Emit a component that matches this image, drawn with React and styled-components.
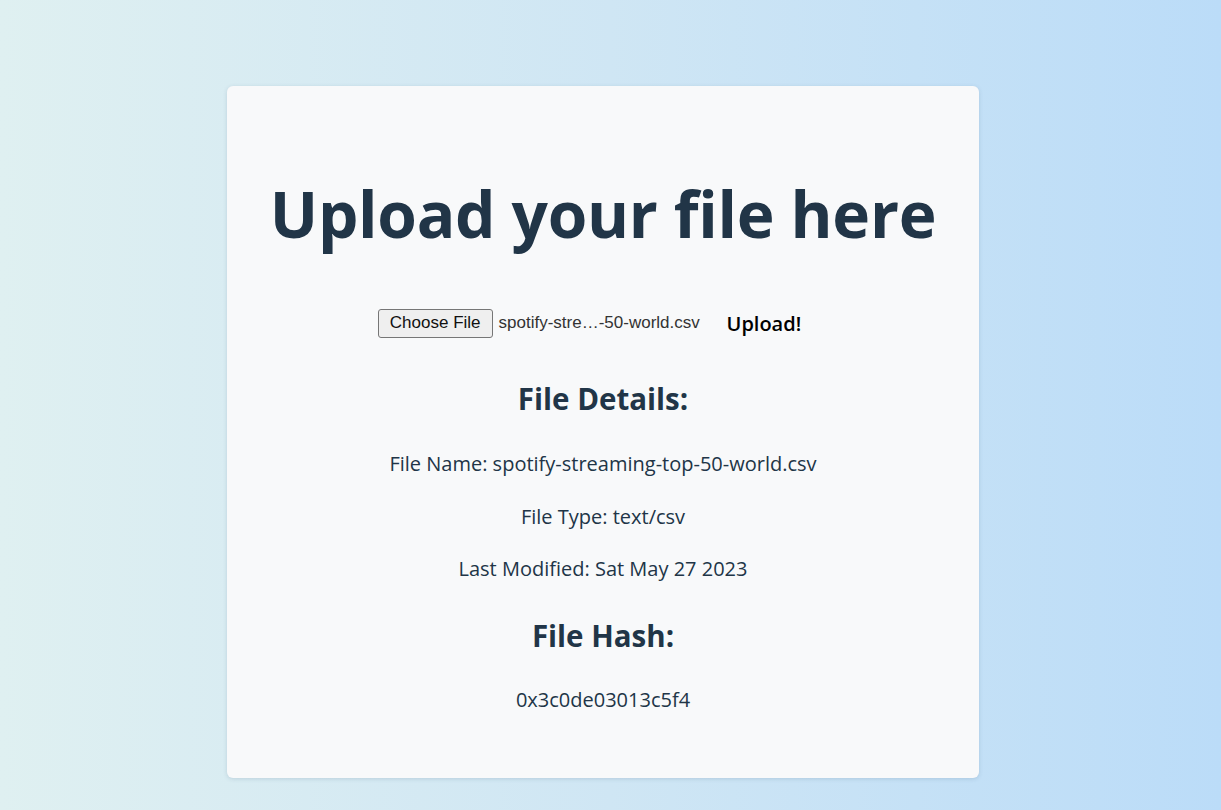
import styled, { createGlobalStyle } from "styled-components";

const GlobalStyle = createGlobalStyle`
    html, body {
        margin: 0;
        padding: 0;
    }

    body {
        min-height: 810px;
        background: linear-gradient(90deg, #dff0f1 0%, #cfe6f4 50%, #bbdcf8 100%);
        font-family: "Open Sans", "Noto Sans", sans-serif;
        color: #213547;
    }
`

const Page = styled.main`
    display: flex;
    justify-content: center;
    padding: 86px 15px 32px 0;
`

const Card = styled.section`
    width: 752px;
    box-sizing: border-box;
    padding: 88px 20px 64px;
    background-color: #f8f9fa;
    border-radius: 6px;
    box-shadow: 0 1px 4px rgba(60, 90, 120, 0.18);
    display: flex;
    flex-direction: column;
    align-items: center;
    text-align: center;
`

const Titulo = styled.h1`
    margin: 0;
    font-size: 64px;
    line-height: 80px;
    font-weight: 700;
    letter-spacing: -0.3px;
    white-space: nowrap;
    color: #213547;
`

const LinhaUpload = styled.div`
    display: flex;
    align-items: center;
    height: 30px;
    margin-top: 54px;
`

const EscolherArquivo = styled.button`
    font-family: "Liberation Sans", Arial, sans-serif;
    font-size: 17px;
    color: #111;
    background: #efefef;
    border: 1px solid #767676;
    border-radius: 3px;
    height: 29px;
    padding: 0 11px;
`

const NomeArquivo = styled.span`
    font-family: "Liberation Sans", Arial, sans-serif;
    font-size: 17px;
    color: #333;
    margin-left: 6px;
    width: 209px;
    text-align: left;
`

const BotaoUpload = styled.button`
    font-family: "Open Sans", "Noto Sans", sans-serif;
    font-size: 20px;
    font-weight: 600;
    color: #000;
    background: transparent;
    border: none;
    border-radius: 8px;
    padding: 0 27px 0 19px;
`

const Subtitulo = styled.h2`
    margin: ${({ $topo }) => $topo}px 0 0;
    font-size: 29.5px;
    line-height: 40px;
    font-weight: 700;
    color: #213547;
`

const Detalhe = styled.p`
    margin: ${({ $topo }) => $topo}px 0 0;
    font-size: 20px;
    line-height: 28px;
    color: #213547;
`

const App = () => {
    return (
        <>
            <GlobalStyle />
            <Page>
                <Card>
                    <Titulo>Upload your file here</Titulo>
                    <LinhaUpload>
                        <EscolherArquivo type="button">Choose File</EscolherArquivo>
                        <NomeArquivo>spotify-stre…-50-world.csv</NomeArquivo>
                        <BotaoUpload type="button">Upload!</BotaoUpload>
                    </LinhaUpload>
                    <Subtitulo $topo={41}>File Details:</Subtitulo>
                    <Detalhe $topo={31}>File Name: spotify-streaming-top-50-world.csv</Detalhe>
                    <Detalhe $topo={25}>File Type: text/csv</Detalhe>
                    <Detalhe $topo={24}>Last Modified: Sat May 27 2023</Detalhe>
                    <Subtitulo $topo={33}>File Hash:</Subtitulo>
                    <Detalhe $topo={30}>0x3c0de03013c5f4</Detalhe>
                </Card>
            </Page>
        </>
    )
}

export default App;
